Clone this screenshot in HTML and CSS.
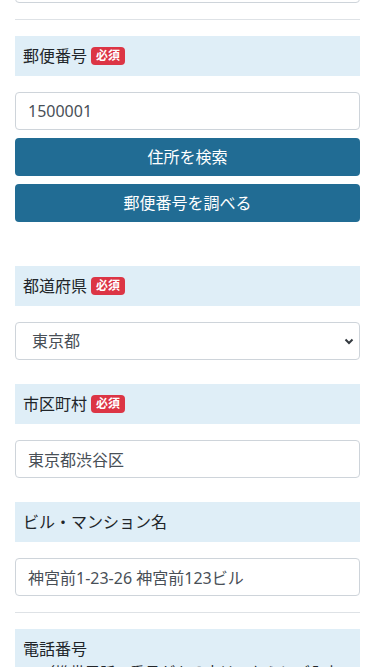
FILE: index.html
```html
<!DOCTYPE html>
<html lang="ja">
<head>
<meta charset="utf-8">
<meta name="viewport" content="width=device-width, initial-scale=1">
<title>住所入力</title>
<link rel="stylesheet" href="styles.css">
</head>
<body>
<div class="container">
  <input class="form-control prev" type="text" value="">
  <hr class="divider">

  <div class="field">
    <div class="label">郵便番号<span class="badge">必須</span></div>
    <input class="form-control" type="text" value="1500001">
    <button class="btn" type="button">住所を検索</button>
    <button class="btn" type="button">郵便番号を調べる</button>
  </div>

  <div class="field field-far">
    <div class="label">都道府県<span class="badge">必須</span></div>
    <div class="select-wrap">
      <select class="form-control select">
        <option>東京都</option>
      </select>
      <svg class="chev" width="10" height="8" viewBox="0 0 10 8"><path d="M1.5 2.5 L5 6 L8.5 2.5" fill="none" stroke="#343a40" stroke-width="2"/></svg>
    </div>
  </div>

  <div class="field">
    <div class="label">市区町村<span class="badge">必須</span></div>
    <input class="form-control" type="text" value="東京都渋谷区">
  </div>

  <div class="field">
    <div class="label">ビル・マンション名</div>
    <input class="form-control" type="text" value="神宮前1-23-26 神宮前123ビル">
  </div>

  <hr class="divider">

  <div class="field field-tight">
    <div class="label">電話番号<div class="sub">（携帯電話の番号がある方はこちらにご入力ください）</div></div>
  </div>
</div>
</body>
</html>
```
FILE: styles.css
```css
html, body {
  margin: 0;
  padding: 0;
  background: #ffffff;
}
body {
  font-family: "Noto Sans", "Noto Sans CJK JP", sans-serif;
  font-size: 16px;
  line-height: 1.5;
  color: #212529;
  overflow: hidden;
}
.container {
  padding: 0 15px;
  display: flex;
  flex-direction: column;
}
.form-control {
  display: block;
  box-sizing: border-box;
  width: 100%;
  height: 38px;
  margin: 0;
  padding: 6px 12px;
  font-family: "Noto Sans", "Noto Sans CJK JP", sans-serif;
  font-size: 16px;
  line-height: 24px;
  color: #495057;
  background: #fff;
  border: 1px solid #ced4da;
  border-radius: 4px;
  outline: none;
}
.prev {
  margin-top: -35px;
}
.divider {
  width: 100%;
  margin: 16px 0;
  border: 0;
  border-top: 1px solid #dee2e6;
  height: 0;
}
.field {
  display: flex;
  flex-direction: column;
  gap: 8px;
}
.field + .field {
  margin-top: 24px;
}
.field.field-far {
  margin-top: 44px;
}
.label {
  box-sizing: border-box;
  padding: 8px 8px;
  background: #dfeef7;
  line-height: 24px;
  color: #212529;
  margin-bottom: 8px;
}
.badge {
  display: inline-block;
  margin-left: 4px;
  padding: 3px 5px;
  font-size: 12px;
  line-height: 12px;
  font-weight: 700;
  color: #fff;
  background: #dc3545;
  border-radius: 4px;
  vertical-align: 2px;
}
.btn {
  display: block;
  width: 100%;
  height: 38px;
  padding: 6px 12px;
  border: 0;
  border-radius: 4px;
  background: #216c94;
  color: #fff;
  font-family: "Noto Sans", "Noto Sans CJK JP", sans-serif;
  font-size: 16px;
  line-height: 24px;
  text-align: center;
}
.select-wrap {
  position: relative;
}
.select {
  appearance: none;
  -webkit-appearance: none;
  padding-left: 16px;
}
.chev {
  position: absolute;
  right: 6px;
  top: 15px;
}
.sub {
  padding-left: 17px;
  font-size: 15px;
  line-height: 20px;
  margin-top: 1px;
}
```
